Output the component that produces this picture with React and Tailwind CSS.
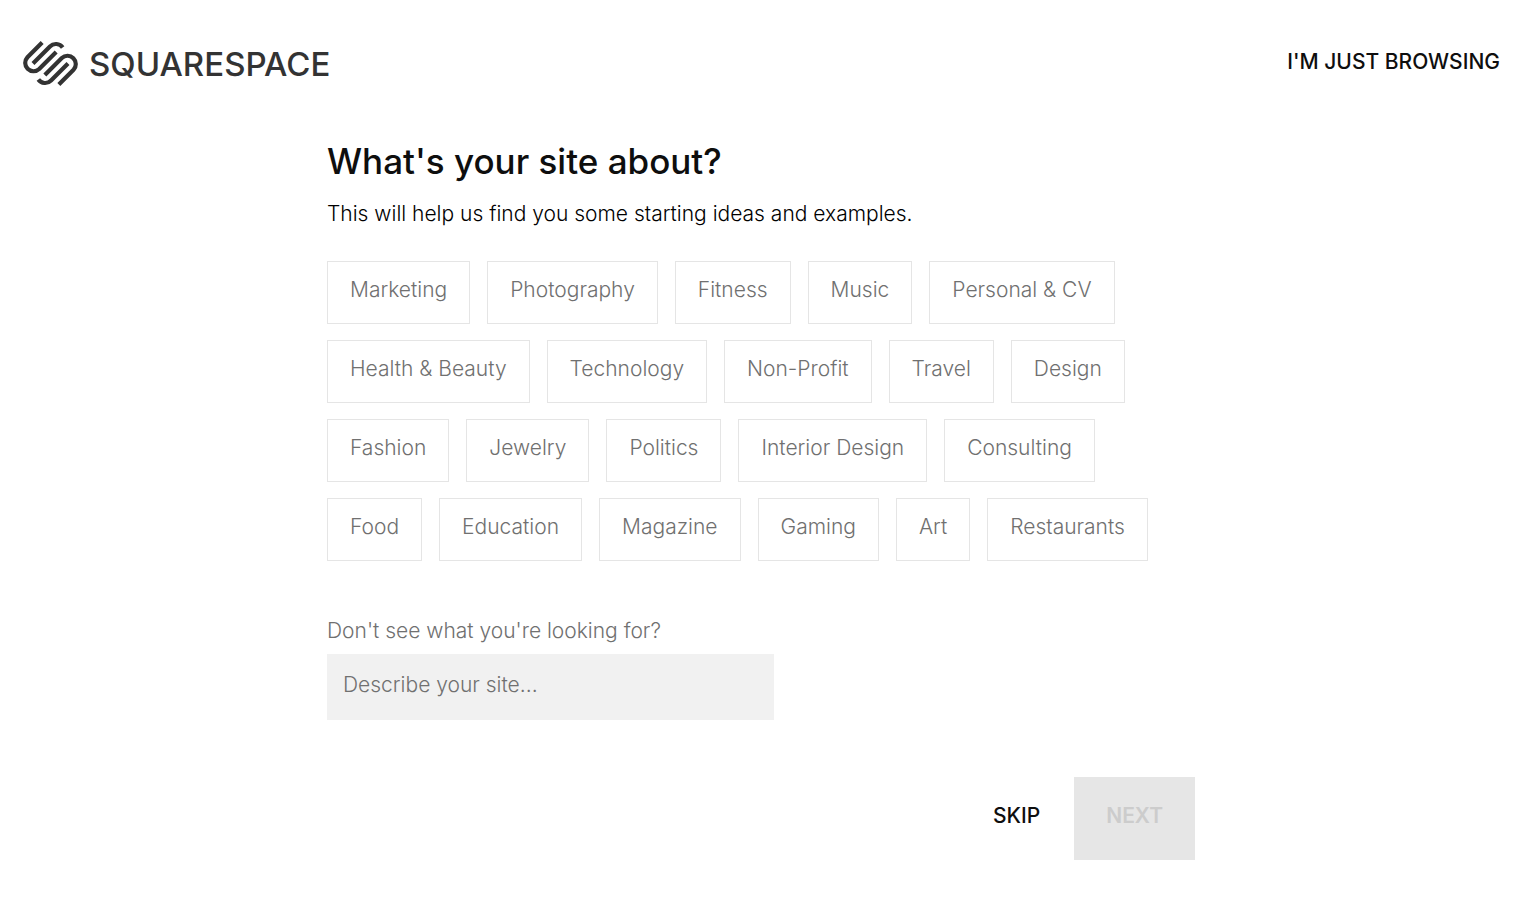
const topics = [
  "Marketing", "Photography", "Fitness", "Music", "Personal & CV",
  "Health & Beauty", "Technology", "Non-Profit", "Travel", "Design",
  "Fashion", "Jewelry", "Politics", "Interior Design", "Consulting",
  "Food", "Education", "Magazine", "Gaming", "Art", "Restaurants",
];

function LogoMark() {
  return (
    <svg
      viewBox="36 30 171 141"
      className="h-[47px] w-[57px]"
      fill="none"
      stroke="currentColor"
      strokeWidth="12.5"
      aria-hidden="true"
    >
      <path d="M96.5 37.6 L52.4 81.7 A24.9 24.9 0 0 0 87.6 116.9 L138.5 66" />
      <path d="M69 100.3 L119.9 49.4 A24.9 24.9 0 0 1 158 52.5" />
      <path d="M146.5 163.4 L190.6 119.3 A24.9 24.9 0 0 0 155.4 84.1 L104.5 135" />
      <path d="M174 100.7 L123.1 151.6 A24.9 24.9 0 0 1 85 148.5" />
    </svg>
  );
}

export default function App() {
  return (
    <div className="min-h-screen bg-white font-['Inter',sans-serif] text-[21px] leading-8 font-light text-[#0e0e0e]">
      <header className="flex items-center justify-between px-[22px] pt-10">
        <a href="#home" className="flex items-center gap-2.5 text-[#333]">
          <LogoMark />
          <span className="text-[33px] font-medium">SQUARESPACE</span>
        </a>
        <button type="button" className="pb-1 font-medium">I'M JUST BROWSING</button>
      </header>

      <main className="mx-auto max-w-[868px] pt-12">
        <h1 className="text-[35px] leading-[52px] font-medium">What's your site about?</h1>
        <p className="mt-[11px] text-black">This will help us find you some starting ideas and examples.</p>

        <div className="mt-[31px] flex flex-wrap gap-x-[17px] gap-y-4 text-[#707070]">
          {topics.map((topic) => (
            <button
              key={topic}
              type="button"
              className="h-[63px] border border-[#e5e5e5] px-[22px] pb-1.5"
            >
              {topic}
            </button>
          ))}
        </div>

        <form className="mt-[54px]">
          <label htmlFor="description" className="block text-[#707070]">
            Don't see what you're looking for?
          </label>
          <input
            id="description"
            type="text"
            placeholder="Describe your site..."
            className="mt-[7px] block h-[66px] w-full max-w-[447px] bg-[#f1f1f1] px-4 pb-1.5 placeholder:text-[#707070] placeholder:opacity-100"
          />
          <div className="mt-[57px] flex items-center justify-end gap-[34px] font-medium">
            <button type="button" className="pb-1.5">SKIP</button>
            <button type="submit" disabled className="h-[83px] bg-[#e6e6e6] px-8 pb-1.5 font-semibold text-[#ccc]">
              NEXT
            </button>
          </div>
        </form>
      </main>
    </div>
  );
}
